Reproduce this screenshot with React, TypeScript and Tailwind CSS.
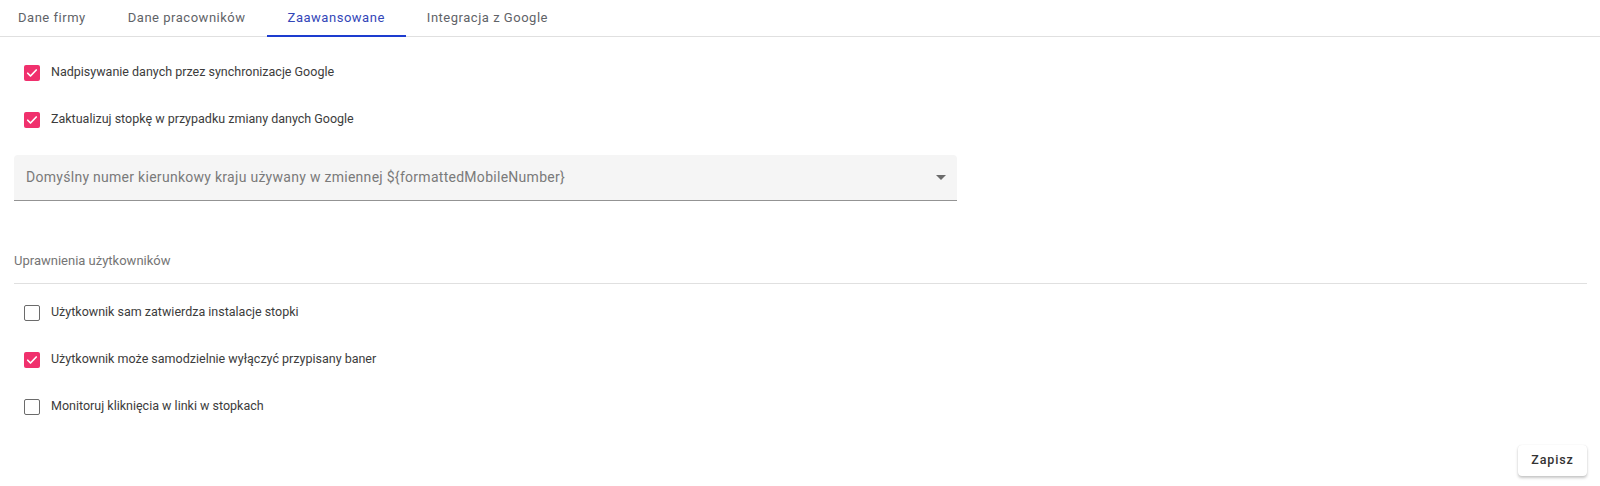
import React, { useState } from "react";

const tabs = ["Dane firmy", "Dane pracowników", "Zaawansowane", "Integracja z Google"];

function CheckRow({ label, checked, onToggle }: { label: string; checked: boolean; onToggle: () => void }) {
  return (
    <div className="flex h-[47px] items-center pl-[10px]" onClick={onToggle}>
      {checked ? (
        <span className="flex h-[16px] w-[16px] items-center justify-center rounded-[2px] bg-[#f0306d]">
          <svg width="12" height="12" viewBox="0 0 24 24" fill="none">
            <path d="M3.5 12.5l5.5 5.5L20.5 6" stroke="#fff" strokeWidth="3.4" strokeLinecap="round" strokeLinejoin="round" />
          </svg>
        </span>
      ) : (
        <span className="h-[16px] w-[16px] rounded-[2px] border-[1.5px] border-[#6b6b6b] bg-white" />
      )}
      <span className="ml-[11px] text-[12.5px] text-[#3c3c3c]">{label}</span>
    </div>
  );
}

export default function App() {
  const [checks, setChecks] = useState([true, true, false, true, false]);
  const toggle = (i: number) => setChecks((c) => c.map((v, j) => (j === i ? !v : v)));

  return (
    <div className="h-[486px] w-[1600px] bg-white font-['Roboto',sans-serif]">
      <div className="flex h-[37px] border-b border-[#e0e0e0]">
        <div className="-ml-[3px] flex">
          {tabs.map((t, i) => (
            <div
              key={t}
              className={`relative flex items-center px-[21px] pb-[1px] text-[13px] tracking-[0.04em] ${
                i === 2 ? "text-[#3346b8]" : "text-[#5f6368]"
              }`}
            >
              {t}
              {i === 2 && <span className="absolute bottom-[-1px] left-0 right-0 h-[2px] bg-[#1d3ccf]" />}
            </div>
          ))}
        </div>
      </div>

      <div className="pl-[14px] pr-[13px] pt-[12px]">
        <CheckRow label="Nadpisywanie danych przez synchronizacje Google" checked={checks[0]} onToggle={() => toggle(0)} />
        <CheckRow label="Zaktualizuj stopkę w przypadku zmiany danych Google" checked={checks[1]} onToggle={() => toggle(1)} />

        <div className="mt-[12px] flex h-[46px] w-[943px] items-center justify-between rounded-t-[4px] border-b border-[#939393] bg-[#f5f5f5] pl-[12px] pr-[11px]">
          <span className="text-[14px] tracking-[0.02em] text-[#7a7a7a]">
            Domyślny numer kierunkowy kraju używany w zmiennej {"${formattedMobileNumber}"}
          </span>
          <svg width="10" height="5" viewBox="0 0 10 5">
            <path d="M0 0h10L5 5z" fill="#6b6b6b" />
          </svg>
        </div>

        <div className="mt-[50px] border-b border-[#e0e0e0] pb-[12px] text-[13px] leading-5 text-[#757575]">
          Uprawnienia użytkowników
        </div>

        <div className="mt-[5px]">
          <CheckRow label="Użytkownik sam zatwierdza instalacje stopki" checked={checks[2]} onToggle={() => toggle(2)} />
          <CheckRow label="Użytkownik może samodzielnie wyłączyć przypisany baner" checked={checks[3]} onToggle={() => toggle(3)} />
          <CheckRow label="Monitoruj kliknięcia w linki w stopkach" checked={checks[4]} onToggle={() => toggle(4)} />
        </div>

        <div className="mt-[15px] flex justify-end">
          <button className="h-[31px] w-[69px] rounded-[4px] bg-white text-[12.5px] font-medium tracking-[0.07em] text-[#333] shadow-[0_2px_3px_rgba(0,0,0,0.22),0_0_1px_rgba(0,0,0,0.12)]">
            Zapisz
          </button>
        </div>
      </div>
    </div>
  );
}
